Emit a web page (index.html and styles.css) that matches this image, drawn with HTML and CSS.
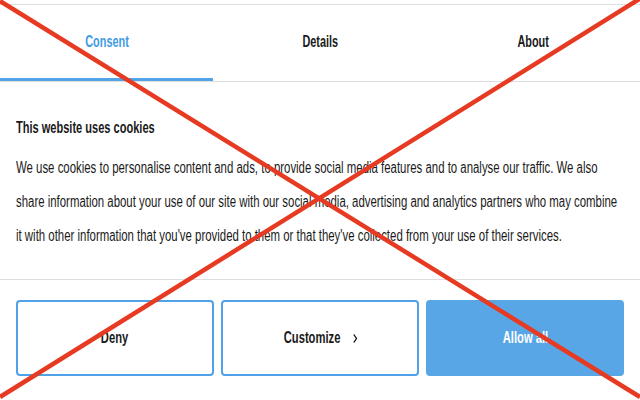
FILE: index.html
```html
<!DOCTYPE html>
<html lang="en">
<head>
    <meta charset="utf-8">
    <title>Cookie consent</title>
    <link rel="stylesheet" href="styles.css">
</head>
<body>
    <div class="dialog">
        <nav class="tabs">
            <div class="tab active"><span class="narrow">Consent</span></div>
            <div class="tab"><span class="narrow">Details</span></div>
            <div class="tab"><span class="narrow">About</span></div>
        </nav>

        <div class="content">
            <h2>This website uses cookies</h2>
            <p>We use cookies to personalise content and ads, to provide social media features and to analyse our traffic. We also share information about your use of our site with our social media, advertising and analytics partners who may combine it with other information that you've provided to them or that they've collected from your use of their services.</p>
        </div>

        <div class="buttons">
            <button class="btn"><span class="narrow">Deny</span></button>
            <button class="btn"><span class="narrow">Customize<svg class="chev" width="6" height="11" viewBox="0 0 6 11"><path d="M1 1.5 L5 5.5 L1 9.5" fill="none" stroke="#111" stroke-width="1.6"/></svg></span></button>
            <button class="btn allow"><span class="narrow">Allow all</span></button>
        </div>
    </div>

    <!-- red cross over the whole shot -->
    <svg class="cross" width="640" height="400" viewBox="0 0 640 400">
        <line x1="0" y1="1" x2="640" y2="397" stroke="#e63b22" stroke-width="4.5"/>
        <line x1="641" y1="-2" x2="0" y2="397" stroke="#e63b22" stroke-width="4.5"/>
    </svg>
</body>
</html>
```

FILE: styles.css
```css
body {
    margin: 0;
    background: #fff;
    font-family: "Liberation Sans", Arial, sans-serif;
    color: #1a1a1a;
    overflow: hidden;
}

/* no condensed font here, so squeeze the text */
.narrow {
    display: inline-block;
    transform: scaleX(0.7);
}

.dialog {
    margin-top: 4px;
    border-top: 1px solid #dedede;
}

.tabs {
    display: flex;
    border-bottom: 1px solid #dedede;
}

.tab {
    flex: 1;
    height: 73px;
    line-height: 73px;
    text-align: center;
    font-size: 16px;
    font-weight: bold;
    border-bottom: 3px solid transparent;
}

.tab .narrow {
    transform: scaleX(0.68);
}

.tab.active {
    color: #3d9ce4;
    border-bottom-color: #52a4e8;
}

.content {
    padding: 36px 16px 26px;
    border-bottom: 1px solid #dedede;
    overflow: hidden;
}

.content h2,
.content p {
    transform-origin: left top;
}

.content h2 {
    margin: 0 0 13px;
    font-size: 16px;
    line-height: 20px;
    transform: scaleX(0.69);
}

.content p {
    margin: 0;
    width: 853px;
    font-size: 16px;
    line-height: 34px;
    transform: scaleX(0.713);
}

.buttons {
    display: flex;
    gap: 7px;
    padding: 20px 16px;
}

.btn {
    flex: 1;
    height: 76px;
    padding: 0;
    font-family: inherit;
    font-size: 16px;
    font-weight: bold;
    color: #1a1a1a;
    background: #fff;
    border: 2px solid #50a2e8;
    border-radius: 4px;
    display: flex;
    align-items: center;
    justify-content: center;
}

.chev {
    margin-left: 18px;
    vertical-align: -1px;
}

.btn.allow {
    background: #58a6e6;
    border-color: #58a6e6;
    color: #fff;
}

.cross {
    position: absolute;
    top: 0;
    left: 0;
}
```
